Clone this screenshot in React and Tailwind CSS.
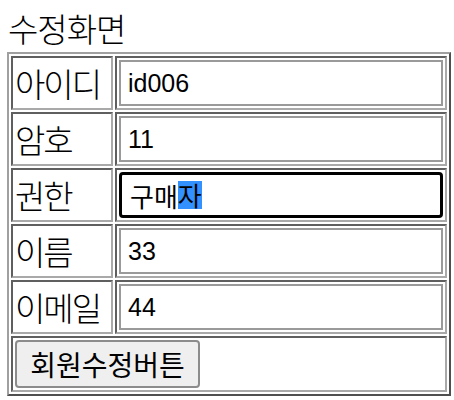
import React from 'react';

const rows = [
  { label: '아이디', value: 'id006' },
  { label: '암호', value: '11' },
  { label: '권한', value: '구매자', focused: true },
  { label: '이름', value: '33' },
  { label: '이메일', value: '44' },
];

const cellBorder =
  'border-2 border-t-[#5f5f5f] border-l-[#5f5f5f] border-b-[#a9a9a9] border-r-[#a9a9a9]';

const Field = ({ value, focused }) => {
  if (focused) {
    // 포커스된 입력칸 (마지막 글자 선택된 상태)
    return (
      <div className="flex items-center h-[46px] w-[324px] border-[3px] border-black rounded-[4px] pl-[8px] text-[26px] bg-white font-['Noto_Sans_CJK_KR',sans-serif]">
        <span>구매</span>
        <span className="bg-[#3390ff] leading-[28px]">자</span>
      </div>
    );
  }
  return (
    <input
      readOnly
      value={value}
      className="block h-[46px] w-[324px] border-2 border-[#9a9a9a] pl-[7px] text-[25px] text-black outline-none bg-white"
    />
  );
};

const App = () => {
  return (
    <div className="bg-white w-[454px] h-[400px] pl-[7px] pt-[10px] text-black font-['Liberation_Sans','Noto_Sans_CJK_KR',sans-serif]">
      <div className="pl-[1px] text-[33px] leading-[36px] tracking-[-1px] font-light font-['Noto_Sans_CJK_KR',sans-serif]">수정화면</div>
      <table className="mt-[6px] w-[444px] border-separate border-spacing-[2px] border-2 border-t-[#a0a0a0] border-l-[#a0a0a0] border-b-[#4f4f4f] border-r-[#4f4f4f]">
        <tbody>
          {rows.map((r) => (
            <tr key={r.label}>
              <td className={`${cellBorder} w-[102px] h-[54px] p-[2px] text-[33px] leading-none tracking-[-2px] whitespace-nowrap font-light font-['Noto_Sans_CJK_KR',sans-serif] align-middle`}>
                {r.label}
              </td>
              <td className={`${cellBorder} p-[2px] align-middle`}>
                <Field value={r.value} focused={r.focused} />
              </td>
            </tr>
          ))}
          <tr>
            <td colSpan={2} className={`${cellBorder} h-[56px] p-[2px] align-middle`}>
              <button className="block h-[48px] w-[185px] border-2 border-[#8c8c8c] rounded-[4px] bg-[#efefef] text-[28px] leading-none font-['Noto_Sans_CJK_KR',sans-serif]">
                회원수정버튼
              </button>
            </td>
          </tr>
        </tbody>
      </table>
    </div>
  );
};

export default App;
